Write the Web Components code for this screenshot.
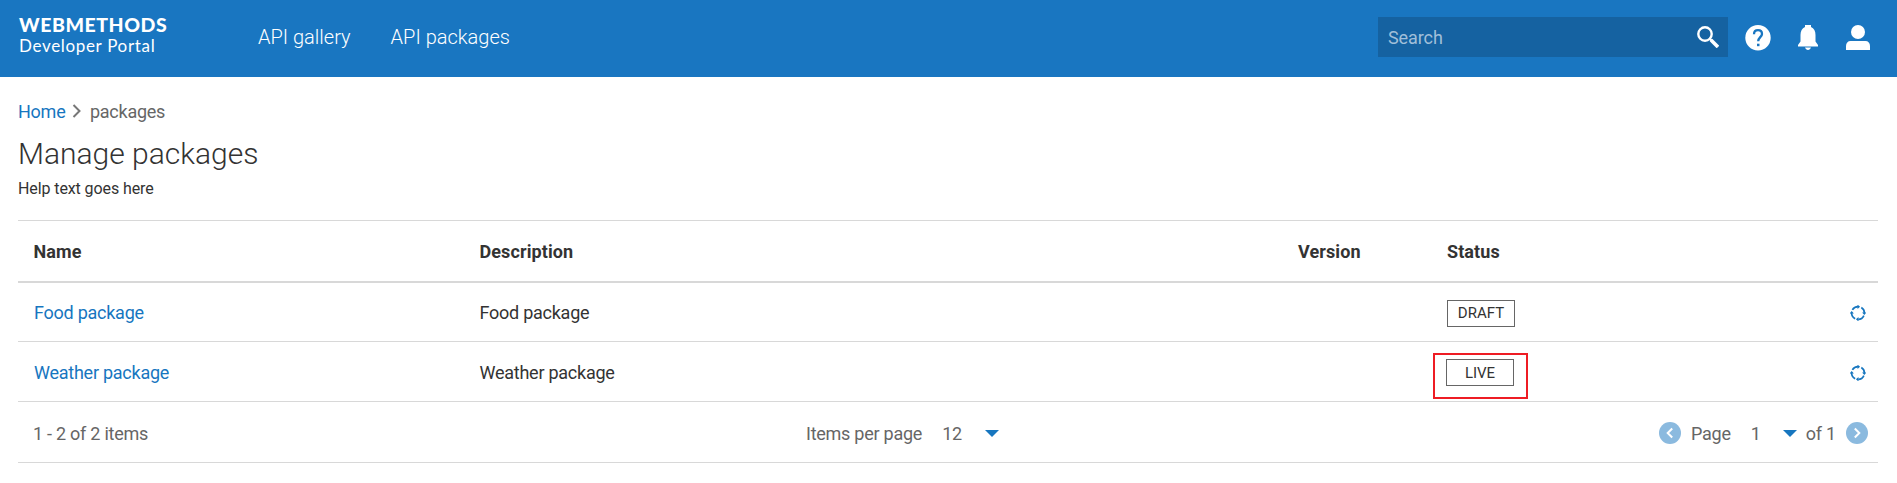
<!DOCTYPE html>
<html lang="en"><head><meta charset="utf-8"><title>Developer Portal</title>
<style>
html,body{margin:0;background:#fff}
body{font-family:Roboto,sans-serif;font-size:18px;color:#333;height:483px;overflow:hidden;letter-spacing:-.25px}
</style></head><body>
<portal-app></portal-app>
<script>
function define(name, html){
  const t=document.createElement('template');t.innerHTML=html;
  customElements.define(name,class extends HTMLElement{
    constructor(){super();this.attachShadow({mode:'open'}).append(t.content.cloneNode(true));}
  });
}
define('portal-icon-search',`<style>:host{display:block;width:22px;height:22px}svg{display:block}</style>
<svg width="22" height="22" viewBox="0 0 22 22"><circle cx="8" cy="8" r="6.7" fill="none" stroke="#fff" stroke-width="2.4"/><path d="M12.500 12.500l2 2" stroke="#fff" stroke-width="2.4"/><path d="M14 14l7 7" stroke="#fff" stroke-width="3.6"/></svg>`);
define('portal-icon-help',`<style>:host{display:block;width:26px;height:26px}svg{display:block}</style>
<svg width="26" height="26" viewBox="0 0 26 26"><circle cx="13" cy="12.800" r="12.700" fill="#fff"/><path d="M9 9.200c0-2.500 1.700-4 4-4s4 1.500 4 3.700c0 3-3.800 3.600-3.800 7.300" fill="none" stroke="#1976c1" stroke-width="2.300"/><path d="M12 18.700h2.500v2.500H12z" fill="#1976c1"/></svg>`);
define('portal-icon-bell',`<style>:host{display:block;width:20px;height:25px;margin-right:1px}svg{display:block}</style>
<svg width="20" height="25" viewBox="0 0 20 25" fill="#fff"><path d="M7 0h6v2c3 1.200 4.500 4 4.500 8v6.500L20 20v1.500H0V20l2.500-3.500V10c0-4 1.500-6.800 4.500-8zM7 22.500h6c-.6 1.500-1.600 2.400-3 2.400s-2.400-.9-3-2.400z"/></svg>`);
define('portal-icon-user',`<style>:host{display:block;width:24px;height:25px}svg{display:block}</style>
<svg width="24" height="25" viewBox="0 0 24 25" fill="#fff"><circle cx="12" cy="7" r="7"/><path d="M0 25v-4c0-3 1.800-5 4.500-5h15c2.700 0 4.500 2 4.500 5v4z"/></svg>`);
define('portal-header',`<style>:host{display:flex;height:77px;background:#1976c1;color:#fff;box-sizing:border-box;padding:0 27px 0 19px;align-items:flex-start}
.logo{font-family:Lato,sans-serif;width:239px;padding-top:13px;white-space:nowrap}
.logo b,.logo span{display:block}.logo b{font-size:19.500px;line-height:24px;font-weight:900;letter-spacing:.55px;margin-bottom:1px}
.logo span{font-size:17px;line-height:15px;letter-spacing:.67px}
nav{display:flex;gap:40px;font-size:20px;font-weight:300;line-height:24px;padding-top:25px;flex:1;letter-spacing:0}
.search{width:350px;height:40px;margin-top:17px;background:#1562a1;display:flex;align-items:center;justify-content:space-between;box-sizing:border-box;padding:0 9px 0 10px;color:#a1bfd9;font-size:18px;margin-right:17px;letter-spacing:-.1px}
.icons{display:flex;padding-top:25px;gap:27px}
</style><div class="logo"><b>WEBMETHODS</b><span>Developer Portal</span></div>
<nav><span>API gallery</span><span>API packages</span></nav>
<div class="search"><span>Search</span><portal-icon-search></portal-icon-search></div>
<div class="icons"><portal-icon-help></portal-icon-help><portal-icon-bell></portal-icon-bell><portal-icon-user></portal-icon-user></div>`);
define('portal-crumbs',`<style>:host{display:flex;align-items:center;height:24px;color:#666}a{color:#1776bf}svg{margin:0 7.500px 0 7px}</style>
<a>Home</a><svg width="10" height="14" viewBox="0 0 10 14"><path d="M1.500 1l6 6-6 6" fill="none" stroke="#777" stroke-width="2"/></svg><span>packages</span>`);
define('package-row',`<style>:host{display:grid;grid-template-columns:445.500px 818.500px 149px 1fr auto;height:57px;align-items:center;padding:2px 12px 0 16px;border-bottom:1px solid #d8d8d8;box-sizing:content-box}
:host([head]){font-weight:700;height:60px;border-bottom-width:2px;letter-spacing:.1px;padding:0 12px 0 15.500px;grid-template-columns:446px 818.500px 149px 1fr}
:host([first]){height:58px;padding-top:0}
</style><slot name="name"></slot><slot name="description"></slot><slot name="version"></slot><slot name="status"></slot><slot name="action"></slot>`);
define('status-badge',`<style>:host{display:flex;box-sizing:border-box;width:68px;height:27px;border:1px solid #666;align-items:center;justify-content:center;font-size:15px;letter-spacing:0}</style><slot></slot>`);
define('cycle-icon',`<style>:host{display:block;width:16px;height:16px}svg{display:block}</style>
<svg width="16" height="16" viewBox="0 0 16 16" fill="none" stroke="#1776bf" stroke-width="1.700"><circle cx="8" cy="8" r="6.400" stroke-dasharray="6.800 3.253" stroke-dashoffset="-2.700"/><path stroke="none" fill="#1776bf" d="M7.500-.4l2.600 2.100-2.600 2.200zM16.400 7.500l-2.100 2.600-2.200-2.600zM8.500 16.400l-2.600-2.100 2.600-2.200zM-.4 8.500l2.100-2.600 2.200 2.600z"/></svg>`);
define('page-button',`<style>:host{display:block;width:22px;height:22px}:host([next]) svg{transform:scaleX(-1)}svg{display:block}</style>
<svg width="22" height="22" viewBox="0 0 22 22"><circle cx="11" cy="11" r="11" fill="#8bbadf"/><path d="M13.200 6.500L8.700 11l4.500 4.500" fill="none" stroke="#fff" stroke-width="2"/></svg>`);
define('caret-down',`<style>:host{display:block;width:14px;height:7px}svg{display:block}</style><svg width="14" height="7"><path d="M0 0h14L7 7z" fill="#1776bf"/></svg>`);
define('table-pager',`<style>:host{display:grid;grid-template-columns:772px 853px 1fr;height:58px;padding:2px 10px 0 16px;align-items:center;border-bottom:1px solid #d8d8d8;color:#666;white-space:nowrap}
div{display:flex;align-items:center}.i{margin-left:-1px}.n{margin-left:20px;width:43px}.p{margin:0 20px 0 10px}.o{width:32px}.f{margin:0 auto 0 9px}</style>
<div><span class="i">1 - 2 of 2 items</span></div><div><span>Items per page</span><span class="n">12</span><caret-down></caret-down></div>
<div><page-button></page-button><span class="p">Page</span><span class="o">1</span><caret-down></caret-down><span class="f">of 1</span><page-button next></page-button></div>`);
define('portal-app',`<style>:host{display:block}main{padding:0 19px 0 18px}
portal-crumbs{margin-top:22px}h1{margin:12px 0 0;font-size:30px;line-height:38px;font-weight:300;letter-spacing:0}p{margin:6px 0 0;font-size:16px;line-height:20px;letter-spacing:-.1px}
.table{margin-top:21px;border-top:1px solid #d8d8d8}a{color:#1776bf}
.draft,[first] cycle-icon{position:relative;top:1px}.live{position:relative;left:-1px}.mark{position:absolute;left:-14px;top:-6px;width:91px;height:42px;border:2px solid #ee1c24}
.w{position:relative}
</style><portal-header></portal-header><main><portal-crumbs></portal-crumbs><h1>Manage packages</h1><p>Help text goes here</p>
<div class="table"><package-row head><span slot="name">Name</span><span slot="description">Description</span><span slot="version">Version</span><span slot="status">Status</span></package-row>
<package-row first><a slot="name">Food package</a><span slot="description">Food package</span><span slot="version"></span><status-badge class="draft" slot="status">DRAFT</status-badge><cycle-icon slot="action"></cycle-icon></package-row>
<package-row><a slot="name">Weather package</a><span slot="description">Weather package</span><span slot="version"></span><div class="w" slot="status"><status-badge class="live">LIVE</status-badge><i class="mark"></i></div><cycle-icon slot="action"></cycle-icon></package-row>
<table-pager></table-pager></div></main>`);
</script></body></html>
